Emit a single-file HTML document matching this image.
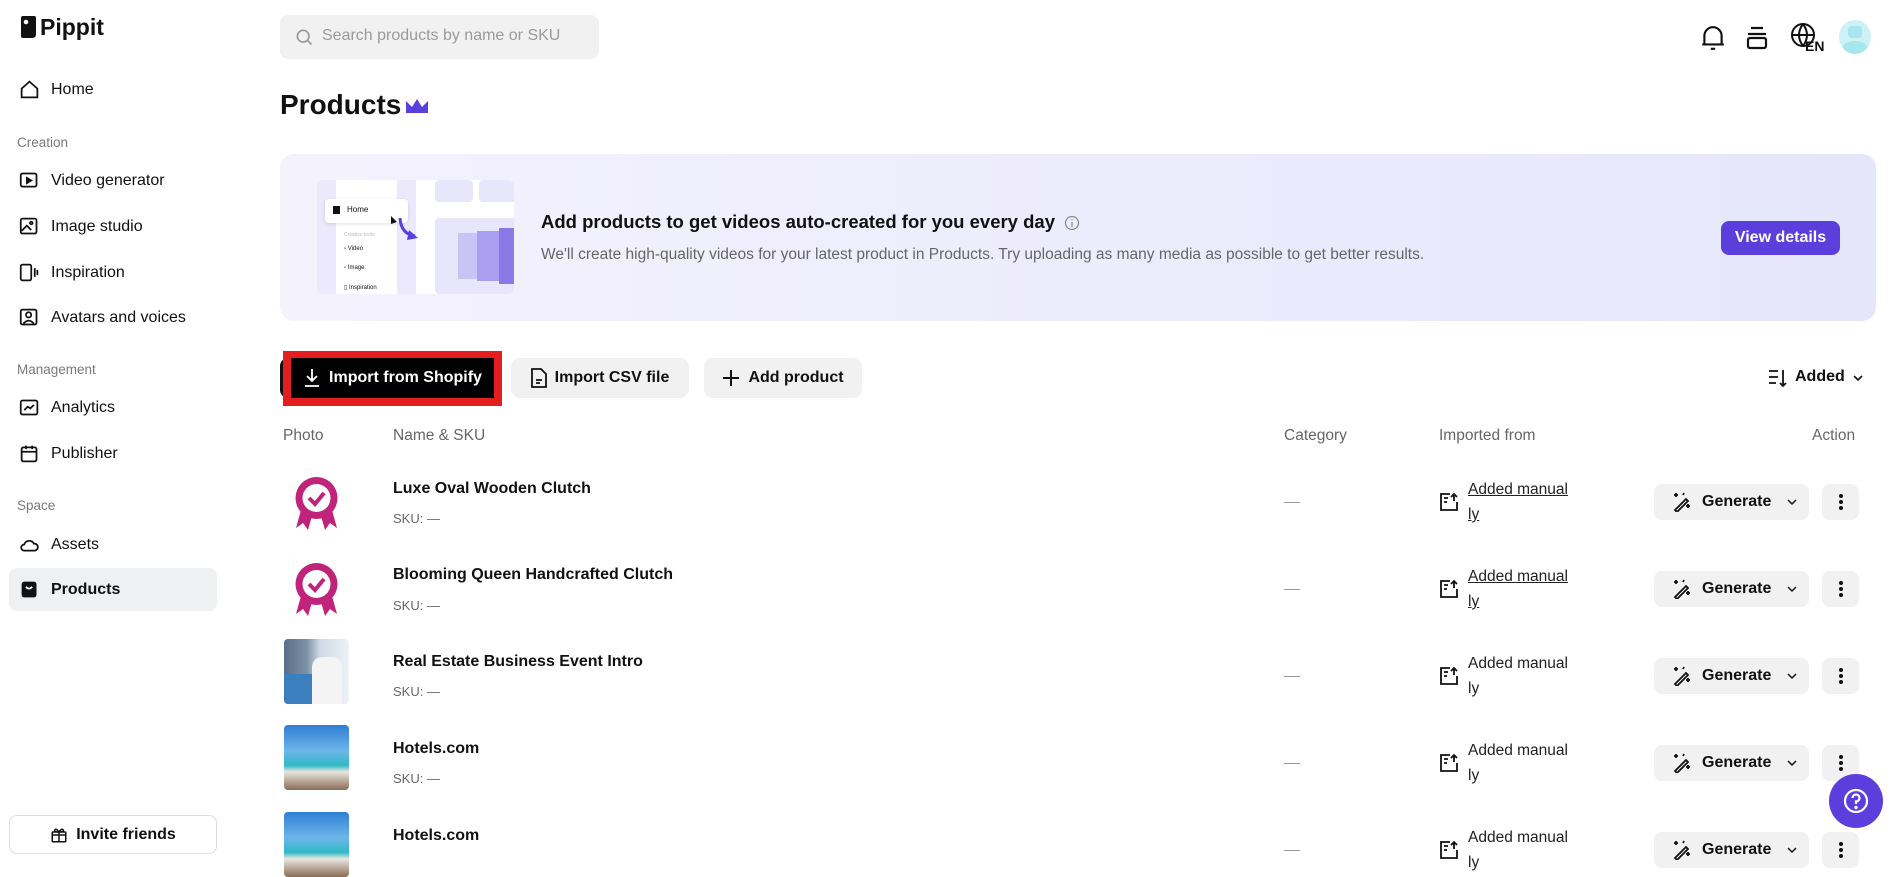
<!DOCTYPE html>
<html><head><meta charset="utf-8"><style>
*{box-sizing:border-box;margin:0;padding:0}
body{width:1894px;height:853px;overflow:hidden;background:#fff;font-family:"Liberation Sans",Arial,sans-serif;color:#111;position:relative}
.a{position:absolute}
.nav{position:absolute;left:19px;font-size:16px;display:flex;align-items:center;gap:11px;color:#111}
.nav svg{width:21px;height:21px}
.lab{position:absolute;left:17px;font-size:13.5px;color:#7a7a7a}
.btn{position:absolute;background:#f1f1f2;border-radius:9px;display:flex;align-items:center;justify-content:center;gap:8px;font-size:16px;font-weight:bold;color:#111}
.th{position:absolute;top:427px;font-size:15.5px;color:#666}
.name{position:absolute;left:393px;font-size:16px;font-weight:bold}
.sku{position:absolute;left:393px;font-size:13px;color:#666}
.dash{position:absolute;left:1284px;width:16px;height:1px;background:#999}
.imp{position:absolute;left:1468px;font-size:15.5px;line-height:25px;color:#222}
.gen{position:absolute;left:1654px;width:155px;height:36px;background:#f1f1f2;border-radius:8px;display:flex;align-items:center;padding-left:18px;gap:10px;font-size:16px;font-weight:bold}
.more{position:absolute;left:1822px;width:37px;height:36px;background:#f1f1f2;border-radius:8px}
.more i{position:absolute;left:17px;width:4px;height:4px;border-radius:2px;background:#111}
.ph{position:absolute;left:284px;width:65px;height:65px;border-radius:4px;overflow:hidden}
</style></head><body>

<!-- logo -->
<svg class="a" style="left:19px;top:15px" width="18" height="24" viewBox="0 0 18 24"><path d="M2 3 Q2 1 4 1 H15 Q17 1 17 3 V19 Q17 23 13 23 H4 Q2 23 2 21Z" fill="#111"/><circle cx="7" cy="7" r="2.3" fill="#fff"/></svg>
<div class="a" style="left:40px;top:14px;font-size:23px;font-weight:bold">Pippit</div>

<div class="nav" style="top:79px"><svg viewBox="0 0 24 24" fill="none" stroke="#111" stroke-width="2"><path d="M3 11 L12 3 L21 11 V21 H3Z"/></svg>Home</div>
<div class="lab" style="top:135px">Creation</div>
<div class="nav" style="top:170px"><svg viewBox="0 0 24 24" fill="none" stroke="#111" stroke-width="2"><rect x="2" y="4" width="18" height="15" rx="2"/><path d="M9 9 L14 12 L9 15Z" fill="#111"/></svg>Video generator</div>
<div class="nav" style="top:216px"><svg viewBox="0 0 24 24" fill="none" stroke="#111" stroke-width="2"><rect x="2" y="3" width="18" height="17" rx="2"/><path d="M3 17 L9 11 L14 16"/><circle cx="14" cy="8" r="1.5"/></svg>Image studio</div>
<div class="nav" style="top:262px"><svg viewBox="0 0 24 24" fill="none" stroke="#111" stroke-width="2"><rect x="2" y="3" width="12" height="18" rx="2"/><path d="M18 7 V17 M21 9 V15"/></svg>Inspiration</div>
<div class="nav" style="top:307px"><svg viewBox="0 0 24 24" fill="none" stroke="#111" stroke-width="2"><rect x="2" y="3" width="18" height="17" rx="2"/><circle cx="11" cy="9" r="3"/><path d="M5 19 Q11 12 17 19"/></svg>Avatars and voices</div>
<div class="lab" style="top:362px">Management</div>
<div class="nav" style="top:397px"><svg viewBox="0 0 24 24" fill="none" stroke="#111" stroke-width="2"><rect x="2" y="4" width="19" height="16" rx="2"/><path d="M6 15 L10 11 L13 13 L17 9"/></svg>Analytics</div>
<div class="nav" style="top:443px"><svg viewBox="0 0 24 24" fill="none" stroke="#111" stroke-width="2"><rect x="3" y="5" width="17" height="16" rx="2"/><path d="M3 10 H20 M8 3 V7 M15 3 V7"/></svg>Publisher</div>
<div class="lab" style="top:498px">Space</div>
<div class="nav" style="top:534px"><svg viewBox="0 0 24 24" fill="none" stroke="#111" stroke-width="2"><path d="M6 19 H18 A4 4 0 0 0 17 11 A6 6 0 0 0 6 12 A3.5 3.5 0 0 0 6 19Z"/></svg>Assets</div>
<div class="a" style="left:9px;top:568px;width:208px;height:43px;background:#eef0f2;border-radius:8px"></div>
<div class="nav" style="top:579px;font-weight:bold"><svg viewBox="0 0 24 24"><rect x="3" y="3" width="17" height="18" rx="3" fill="#111"/><path d="M8 9 Q11.5 13 15 9" stroke="#fff" stroke-width="2" fill="none"/></svg>Products</div>
<div class="a" style="left:9px;top:815px;width:208px;height:39px;border:1px solid #ddd;border-radius:8px;display:flex;align-items:center;justify-content:center;gap:8px;font-size:16px;font-weight:bold"><svg width="18" height="18" viewBox="0 0 24 24" fill="none" stroke="#111" stroke-width="2"><rect x="3" y="8" width="18" height="13" rx="1"/><path d="M3 12 H21 M12 8 V21 M12 8 Q8 2 6 6 Q6 8 12 8 Q16 2 18 6 Q18 8 12 8"/></svg>Invite friends</div>

<!-- search -->
<div class="a" style="left:280px;top:15px;width:319px;height:44px;background:#f1f1f2;border-radius:8px"></div>
<svg class="a" style="left:294px;top:27px" width="20" height="20" viewBox="0 0 24 24" fill="none" stroke="#999" stroke-width="2"><circle cx="11" cy="11" r="7"/><path d="M16 16 L21 21"/></svg>
<div class="a" style="left:322px;top:27px;font-size:16px;color:#9a9a9a">Search products by name or SKU</div>

<!-- top right -->
<svg class="a" style="left:1700px;top:24px" width="26" height="28" viewBox="0 0 24 26" fill="none" stroke="#111" stroke-width="2"><path d="M4 19 V11 A8 8 0 0 1 20 11 V19 H4 Z M2 19 H22 M10 23 H14"/></svg>
<svg class="a" style="left:1745px;top:25px" width="24" height="26" viewBox="0 0 24 26" fill="none" stroke="#111" stroke-width="2.2"><path d="M6 3 H18 M3 9 H21"/><rect x="3" y="13" width="18" height="10" rx="2"/></svg>
<svg class="a" style="left:1790px;top:22px" width="36" height="30" viewBox="0 0 36 30" fill="none" stroke="#111" stroke-width="2"><circle cx="13" cy="13" r="11"/><path d="M2 13 H24 M13 2 Q5 13 13 24 M13 2 Q21 13 13 24"/><text x="15" y="29" font-size="14" font-weight="bold" fill="#111" stroke="none" font-family="Liberation Sans">EN</text></svg>
<div class="a" style="left:1839px;top:20px;width:32px;height:34px;border-radius:50%;background:#cdf1f4;overflow:hidden"><div class="a" style="left:9px;top:6px;width:14px;height:12px;border-radius:4px;background:#a7e6ec"></div><div class="a" style="left:3px;top:21px;width:26px;height:16px;border-radius:50%;background:#a7e6ec"></div></div>

<!-- title -->
<div class="a" style="left:280px;top:89px;font-size:28px;font-weight:bold">Products</div>
<svg class="a" style="left:405px;top:97px" width="24" height="18" viewBox="0 0 24 18"><path d="M1 4 L7 10 L12 2 L17 10 L23 4 V16 H1Z" fill="#5b3fdc"/></svg>

<!-- banner -->
<div class="a" style="left:280px;top:154px;width:1596px;height:167px;border-radius:14px;background:linear-gradient(90deg,#f4f2fd,#e6e6fb)"></div>
<div class="a" style="left:317px;top:180px;width:197px;height:114px;border-radius:6px;background:#fff;overflow:hidden">
 <div class="a" style="left:0;top:0;width:19px;height:114px;background:#ebe9fb"></div>
 <div class="a" style="left:80px;top:0;width:19px;height:114px;background:#ebe9fb"></div>
 <div class="a" style="left:118px;top:0;width:38px;height:22px;border-radius:4px;background:#e8e6fb"></div>
 <div class="a" style="left:162px;top:0;width:40px;height:22px;border-radius:4px;background:#e8e6fb"></div>
 <div class="a" style="left:118px;top:38px;width:85px;height:76px;border-radius:4px;background:#e8e6fb"></div>
 <div class="a" style="left:141px;top:53px;width:22px;height:46px;background:#c9c4f5"></div>
 <div class="a" style="left:160px;top:51px;width:25px;height:50px;background:#ab9ef0"></div>
 <div class="a" style="left:182px;top:48px;width:21px;height:56px;background:#8a78e6"></div>
 <div class="a" style="left:8px;top:19px;width:83px;height:24px;border-radius:4px;background:#fff;box-shadow:0 1px 4px rgba(0,0,0,.12);font-size:8px;padding:6px 0 0 22px">Home</div>
 <div class="a" style="left:16px;top:26px;width:7px;height:8px;background:#111"></div>
 <svg class="a" style="left:70px;top:36px" width="36" height="30" viewBox="0 0 36 30"><path d="M4 0 L10 6 L4 8Z" fill="#111"/><path d="M13 2 Q14 18 28 20" stroke="#5b3fdc" stroke-width="3" fill="none"/><path d="M22 14 L31 22 L20 24Z" fill="#5b3fdc"/></svg>
 <div class="a" style="left:27px;top:52px;font-size:5px;color:#bbb">Creative tools</div>
 <div class="a" style="left:27px;top:66px;font-size:6px">▫ Video</div>
 <div class="a" style="left:27px;top:85px;font-size:6px">▫ Image</div>
 <div class="a" style="left:27px;top:104px;font-size:6px">▯ Inspiration</div>
</div>
<div class="a" style="left:541px;top:211px;font-size:18.5px;font-weight:bold">Add products to get videos auto-created for you every day</div>
<svg class="a" style="left:1064px;top:215px" width="16" height="16" viewBox="0 0 16 16" fill="none" stroke="#888" stroke-width="1.2"><circle cx="8" cy="8" r="6.5"/><path d="M8 7 V12 M8 4.5 V5.5"/></svg>
<div class="a" style="left:541px;top:246px;font-size:15.5px;color:#666">We'll create high-quality videos for your latest product in Products. Try uploading as many media as possible to get better results.</div>
<div class="a" style="left:1721px;top:221px;width:119px;height:34px;border-radius:8px;background:#5b3fdc;color:#fff;font-size:16px;font-weight:bold;display:flex;align-items:center;justify-content:center">View details</div>

<!-- buttons -->
<div class="a" style="left:280px;top:358px;width:20px;height:40px;border-radius:8px;background:#111"></div>
<div class="a" style="left:283px;top:351px;width:219px;height:55px;background:#e31e1e"></div>
<div class="a" style="left:291px;top:358px;width:203px;height:40px;background:#000;display:flex;align-items:center;justify-content:center;gap:8px;color:#fff;font-size:16px;font-weight:bold"><svg width="18" height="20" viewBox="0 0 18 20" fill="none" stroke="#fff" stroke-width="1.8"><path d="M9 1 V13 M4 8 L9 13 L14 8 M2 18 H16"/></svg>Import from Shopify</div>
<div class="btn" style="left:511px;top:358px;width:178px;height:40px"><svg width="16" height="20" viewBox="0 0 16 20" fill="none" stroke="#111" stroke-width="1.8"><path d="M1 1 H10 L15 6 V19 H1Z M5 12 H11 M5 15 H9"/></svg>Import CSV file</div>
<div class="btn" style="left:704px;top:358px;width:158px;height:40px"><svg width="18" height="18" viewBox="0 0 18 18" stroke="#111" stroke-width="2"><path d="M9 1 V17 M1 9 H17"/></svg>Add product</div>
<svg class="a" style="left:1768px;top:368px" width="20" height="20" viewBox="0 0 20 20" fill="none" stroke="#111" stroke-width="1.8"><path d="M1 3 H10 M1 9 H10 M1 15 H8 M15 2 V18 M12 15 L15 18 L18 15"/></svg>
<div class="a" style="left:1795px;top:368px;font-size:16px;font-weight:bold">Added</div>
<svg class="a" style="left:1853px;top:374px" width="10" height="8" viewBox="0 0 10 8" fill="none" stroke="#111" stroke-width="1.6"><path d="M1 2 L5 6 L9 2"/></svg>

<!-- table head -->
<div class="th" style="left:283px">Photo</div>
<div class="th" style="left:393px">Name &amp; SKU</div>
<div class="th" style="left:1284px">Category</div>
<div class="th" style="left:1439px">Imported from</div>
<div class="th" style="left:1812px">Action</div>

<!-- rows -->
<svg class="ph" style="top:470px;border-radius:0" viewBox="0 0 65 65"><path d="M17 40 L12 58 L19 53 L24 60 L28 46Z M48 40 L53 58 L46 53 L41 60 L37 46Z" fill="#c0247a"/><circle cx="32.5" cy="28" r="21" fill="#c0247a"/><circle cx="32.5" cy="28" r="14" fill="#fff"/><path d="M25 28 L31 34 L40 23" stroke="#c0247a" stroke-width="4" fill="none"/></svg>
<svg class="ph" style="top:556px;border-radius:0" viewBox="0 0 65 65"><path d="M17 40 L12 58 L19 53 L24 60 L28 46Z M48 40 L53 58 L46 53 L41 60 L37 46Z" fill="#c0247a"/><circle cx="32.5" cy="28" r="21" fill="#c0247a"/><circle cx="32.5" cy="28" r="14" fill="#fff"/><path d="M25 28 L31 34 L40 23" stroke="#c0247a" stroke-width="4" fill="none"/></svg>
<div class="ph" style="top:639px;background:linear-gradient(90deg,#5a6f86 0%,#7c90a6 35%,#cfd9e4 55%,#eef2f6 100%)"><div class="a" style="left:0;top:35px;width:30px;height:30px;background:#3c7fbf"></div><div class="a" style="left:28px;top:18px;width:30px;height:47px;border-radius:10px 10px 0 0;background:#f4f4f4"></div></div>
<div class="ph" style="top:725px;background:linear-gradient(180deg,#2f7fd3 0%,#6fb5ea 40%,#2fb9c5 62%,#e9e6df 72%,#8a6d55 100%)"></div>
<div class="ph" style="top:812px;background:linear-gradient(180deg,#2f7fd3 0%,#6fb5ea 40%,#2fb9c5 62%,#e9e6df 72%,#8a6d55 100%)"></div>

<div class="name" style="top:480px">Luxe Oval Wooden Clutch</div><div class="sku" style="top:511px">SKU: —</div>
<div class="name" style="top:566px">Blooming Queen Handcrafted Clutch</div><div class="sku" style="top:598px">SKU: —</div>
<div class="name" style="top:653px">Real Estate Business Event Intro</div><div class="sku" style="top:684px">SKU: —</div>
<div class="name" style="top:740px">Hotels.com</div><div class="sku" style="top:771px">SKU: —</div>
<div class="name" style="top:827px">Hotels.com</div>

<div class="dash" style="top:502px"></div><div class="dash" style="top:589px"></div><div class="dash" style="top:676px"></div><div class="dash" style="top:763px"></div><div class="dash" style="top:850px"></div>

<!-- imported -->
<svg class="a" style="left:1439px;top:492px" width="20" height="20" viewBox="0 0 20 20" fill="none" stroke="#111" stroke-width="1.8"><path d="M11 2 H2 V18 H18 V10 M5 6 H9 M5 10 H8 M15 2 V9 M12 5 L15 2 L18 5"/></svg>
<svg class="a" style="left:1439px;top:579px" width="20" height="20" viewBox="0 0 20 20" fill="none" stroke="#111" stroke-width="1.8"><path d="M11 2 H2 V18 H18 V10 M5 6 H9 M5 10 H8 M15 2 V9 M12 5 L15 2 L18 5"/></svg>
<svg class="a" style="left:1439px;top:666px" width="20" height="20" viewBox="0 0 20 20" fill="none" stroke="#111" stroke-width="1.8"><path d="M11 2 H2 V18 H18 V10 M5 6 H9 M5 10 H8 M15 2 V9 M12 5 L15 2 L18 5"/></svg>
<svg class="a" style="left:1439px;top:753px" width="20" height="20" viewBox="0 0 20 20" fill="none" stroke="#111" stroke-width="1.8"><path d="M11 2 H2 V18 H18 V10 M5 6 H9 M5 10 H8 M15 2 V9 M12 5 L15 2 L18 5"/></svg>
<svg class="a" style="left:1439px;top:840px" width="20" height="20" viewBox="0 0 20 20" fill="none" stroke="#111" stroke-width="1.8"><path d="M11 2 H2 V18 H18 V10 M5 6 H9 M5 10 H8 M15 2 V9 M12 5 L15 2 L18 5"/></svg>
<div class="imp" style="top:477px;text-decoration:underline">Added manual<br>ly</div>
<div class="imp" style="top:564px;text-decoration:underline">Added manual<br>ly</div>
<div class="imp" style="top:651px">Added manual<br>ly</div>
<div class="imp" style="top:738px">Added manual<br>ly</div>
<div class="imp" style="top:825px">Added manual<br>ly</div>

<!-- actions -->
<div class="gen" style="top:484px"><svg width="20" height="20" viewBox="0 0 20 20" fill="none" stroke="#111" stroke-width="1.8"><path d="M3 18 L14 7 L16 9 L5 20Z M4 1 V5 M2 3 H6 M16 12 V16 M14 14 H18 M11 3 L12 1"/></svg>Generate<svg width="10" height="8" viewBox="0 0 10 8" fill="none" stroke="#111" stroke-width="1.5" style="margin-left:6px"><path d="M1 2 L5 6 L9 2"/></svg></div>
<div class="gen" style="top:571px"><svg width="20" height="20" viewBox="0 0 20 20" fill="none" stroke="#111" stroke-width="1.8"><path d="M3 18 L14 7 L16 9 L5 20Z M4 1 V5 M2 3 H6 M16 12 V16 M14 14 H18 M11 3 L12 1"/></svg>Generate<svg width="10" height="8" viewBox="0 0 10 8" fill="none" stroke="#111" stroke-width="1.5" style="margin-left:6px"><path d="M1 2 L5 6 L9 2"/></svg></div>
<div class="gen" style="top:658px"><svg width="20" height="20" viewBox="0 0 20 20" fill="none" stroke="#111" stroke-width="1.8"><path d="M3 18 L14 7 L16 9 L5 20Z M4 1 V5 M2 3 H6 M16 12 V16 M14 14 H18 M11 3 L12 1"/></svg>Generate<svg width="10" height="8" viewBox="0 0 10 8" fill="none" stroke="#111" stroke-width="1.5" style="margin-left:6px"><path d="M1 2 L5 6 L9 2"/></svg></div>
<div class="gen" style="top:745px"><svg width="20" height="20" viewBox="0 0 20 20" fill="none" stroke="#111" stroke-width="1.8"><path d="M3 18 L14 7 L16 9 L5 20Z M4 1 V5 M2 3 H6 M16 12 V16 M14 14 H18 M11 3 L12 1"/></svg>Generate<svg width="10" height="8" viewBox="0 0 10 8" fill="none" stroke="#111" stroke-width="1.5" style="margin-left:6px"><path d="M1 2 L5 6 L9 2"/></svg></div>
<div class="gen" style="top:832px"><svg width="20" height="20" viewBox="0 0 20 20" fill="none" stroke="#111" stroke-width="1.8"><path d="M3 18 L14 7 L16 9 L5 20Z M4 1 V5 M2 3 H6 M16 12 V16 M14 14 H18 M11 3 L12 1"/></svg>Generate<svg width="10" height="8" viewBox="0 0 10 8" fill="none" stroke="#111" stroke-width="1.5" style="margin-left:6px"><path d="M1 2 L5 6 L9 2"/></svg></div>
<div class="more" style="top:484px"><i style="top:10px"></i><i style="top:16px"></i><i style="top:22px"></i></div>
<div class="more" style="top:571px"><i style="top:10px"></i><i style="top:16px"></i><i style="top:22px"></i></div>
<div class="more" style="top:658px"><i style="top:10px"></i><i style="top:16px"></i><i style="top:22px"></i></div>
<div class="more" style="top:745px"><i style="top:10px"></i><i style="top:16px"></i><i style="top:22px"></i></div>
<div class="more" style="top:832px"><i style="top:10px"></i><i style="top:16px"></i><i style="top:22px"></i></div>

<!-- help -->
<div class="a" style="left:1829px;top:774px;width:54px;height:54px;border-radius:50%;background:#5b3fdc"></div>
<svg class="a" style="left:1842px;top:787px" width="28" height="28" viewBox="0 0 28 28" fill="none" stroke="#fff" stroke-width="2.2"><circle cx="14" cy="14" r="11"/><path d="M10.5 11 A3.5 3.5 0 1 1 14 14.5 V17"/><circle cx="14" cy="20.5" r="0.6" fill="#fff"/></svg>
</body></html>
